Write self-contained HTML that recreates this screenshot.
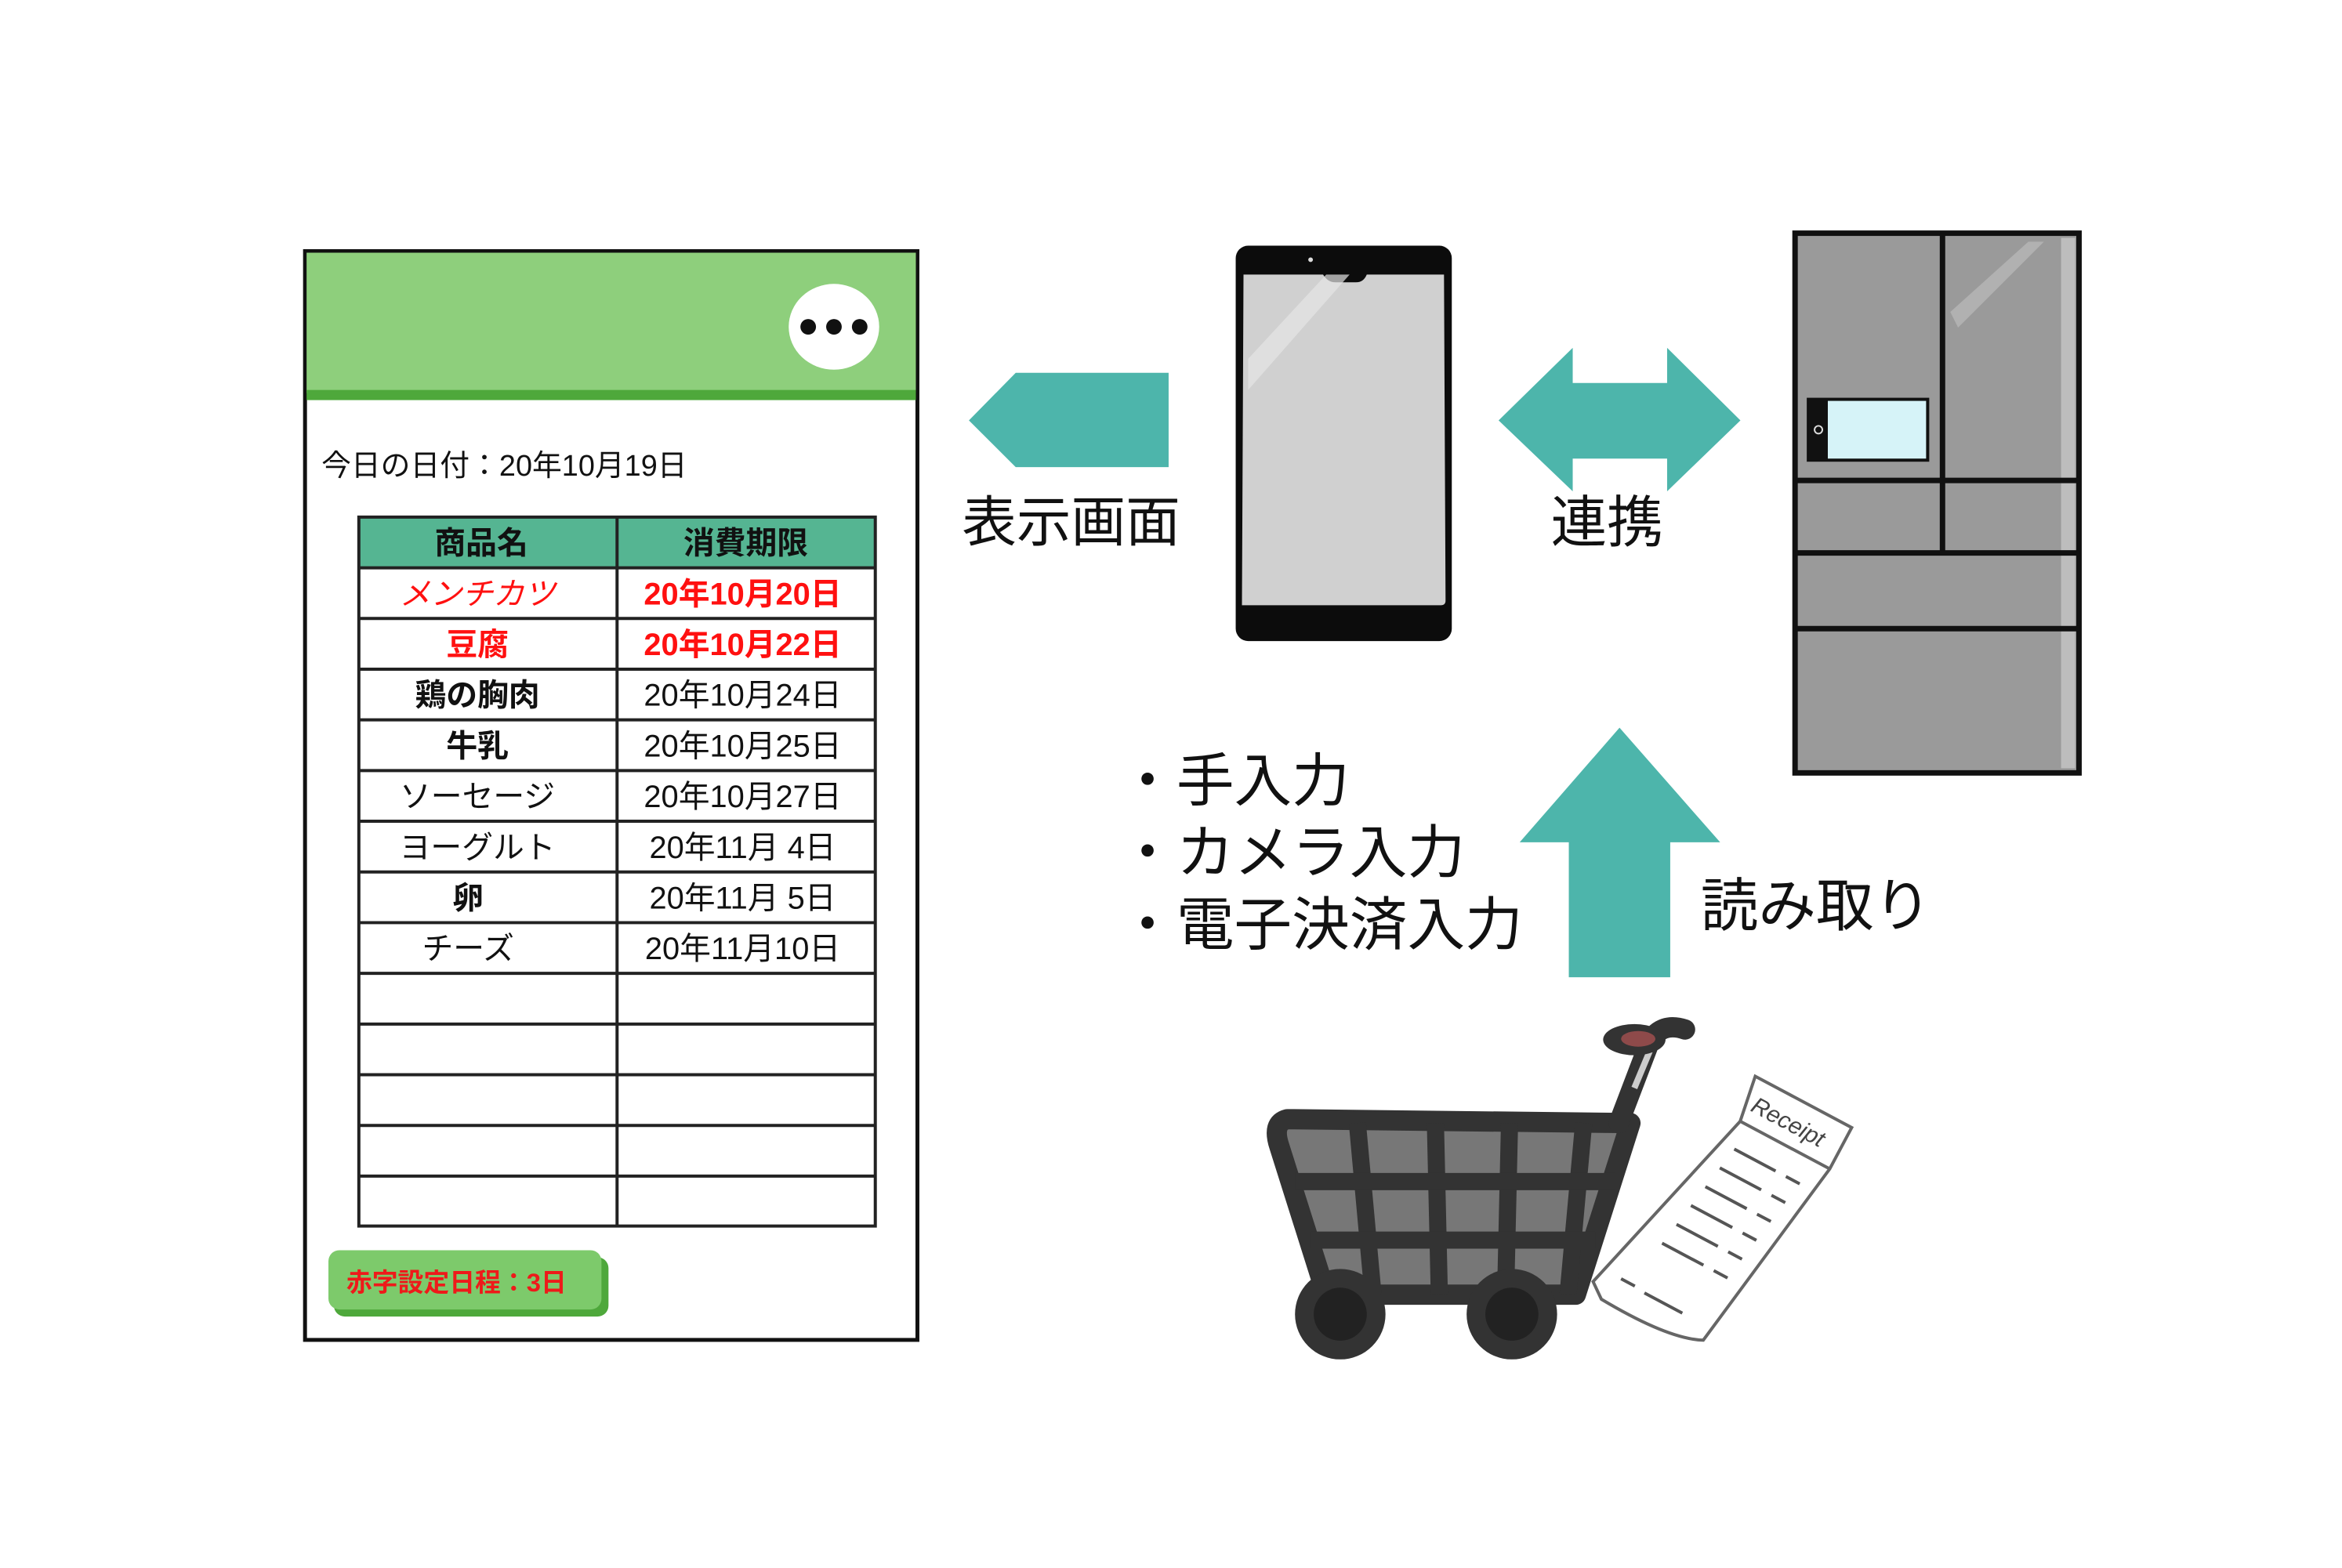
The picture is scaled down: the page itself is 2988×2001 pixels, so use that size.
<!DOCTYPE html>
<html><head><meta charset="utf-8"><style>
html,body{margin:0;padding:0;background:#fff}
svg{display:block}
text{font-family:"Liberation Sans","Noto Sans CJK JP",sans-serif}
</style></head><body>
<svg width="2988" height="2001" viewBox="0 0 2988 2001" xmlns="http://www.w3.org/2000/svg">
<rect width="2988" height="2001" fill="#fff"/>
<g transform="scale(0.9953)">
<!-- left panel -->
<rect x="391" y="322" width="785" height="1396" fill="#fff" stroke="#111" stroke-width="5"/>
<rect x="393" y="324" width="781" height="180" fill="#8ecf7c"/>
<rect x="393" y="500" width="781" height="13" fill="#4ea83b"/>
<ellipse cx="1069" cy="419" rx="58" ry="55" fill="#fff"/>
<circle cx="1036" cy="419" r="10" fill="#111"/><circle cx="1069" cy="419" r="10" fill="#111"/><circle cx="1102" cy="419" r="10" fill="#111"/>
<text x="412" y="610" font-size="38" fill="#111">今日の日付：20年10月19日</text>
<rect x="460" y="663" width="662" height="65" fill="#55b592"/>
<g stroke="#222" stroke-width="4" fill="none">
<rect x="460" y="663" width="662" height="909"/>
<line x1="791" y1="663" x2="791" y2="1572"/>
<line x1="460" y1="728" x2="1122" y2="728"/>
<line x1="460" y1="793" x2="1122" y2="793"/><line x1="460" y1="858" x2="1122" y2="858"/>
<line x1="460" y1="923" x2="1122" y2="923"/><line x1="460" y1="988" x2="1122" y2="988"/>
<line x1="460" y1="1053" x2="1122" y2="1053"/><line x1="460" y1="1118" x2="1122" y2="1118"/>
<line x1="460" y1="1183" x2="1122" y2="1183"/><line x1="460" y1="1248" x2="1122" y2="1248"/>
<line x1="460" y1="1313" x2="1122" y2="1313"/><line x1="460" y1="1378" x2="1122" y2="1378"/>
<line x1="460" y1="1443" x2="1122" y2="1443"/><line x1="460" y1="1508" x2="1122" y2="1508"/>
</g>
<g font-size="40" text-anchor="middle" fill="#111">
<text x="617" y="710" font-weight="bold">商品名</text>
<text x="956" y="710" font-weight="bold">消費期限</text>
<text x="612" y="775" fill="#ff1010" font-style="italic">メンチカツ</text>
<text x="952" y="775" fill="#ff1010" font-weight="bold">20年10月20日</text>
<text x="612" y="840" fill="#ff1010" font-weight="bold">豆腐</text>
<text x="952" y="840" fill="#ff1010" font-weight="bold">20年10月22日</text>
<text x="612" y="905" font-weight="bold">鶏の胸肉</text>
<text x="952" y="905">20年10月24日</text>
<text x="612" y="970" font-weight="bold">牛乳</text>
<text x="952" y="970">20年10月25日</text>
<text x="612" y="1035">ソーセージ</text>
<text x="952" y="1035">20年10月27日</text>
<text x="612" y="1100">ヨーグルト</text>
<text x="952" y="1100">20年11月 4日</text>
<text x="600" y="1165" font-weight="bold">卵</text>
<text x="952" y="1165">20年11月 5日</text>
<text x="600" y="1230">チーズ</text>
<text x="952" y="1230">20年11月10日</text>
</g>
<rect x="428" y="1612" width="352" height="76" rx="14" fill="#4ea83b"/>
<rect x="421" y="1603" width="350" height="76" rx="14" fill="#7dca6b"/>
<text x="444" y="1656" font-size="33" font-weight="bold" fill="#ee1a1a">赤字設定日程：3日</text>
<!-- left arrow -->
<polygon points="1242,539 1302,478 1498,478 1498,599 1302,599" fill="#4db5ab"/>
<text x="1233" y="694" font-size="70" fill="#111">表示画面</text>
<!-- phone -->
<rect x="1584" y="315" width="277" height="507" rx="16" fill="#0c0c0c"/>
<path d="M1594 352 L1696 352 Q1702 362 1712 362 L1738 362 Q1748 362 1752 352 L1851 352 L1853 770 Q1853 776 1847 776 L1592 776 Z" fill="#d0d0d0"/>
<path d="M1600 460 L1700 352 L1730 352 L1600 500 Z" fill="#e6e6e6" opacity="0.7"/>
<circle cx="1680" cy="333" r="3" fill="#ddd"/>
<!-- double arrow -->
<polygon points="1921,539 2016,446 2016,491 2137,491 2137,446 2231,539 2137,630 2137,588 2016,588 2016,630" fill="#4db5ab"/>
<text x="1988" y="695" font-size="72" fill="#111">連携</text>
<!-- fridge -->
<rect x="2301" y="299" width="364" height="692" fill="#9a9a9a" stroke="#111" stroke-width="7"/>
<rect x="2642" y="305" width="18" height="680" fill="#bdbdbd"/>
<path d="M2500 400 L2600 310 L2620 310 L2510 420 Z" fill="#bbb" opacity="0.7"/>
<g stroke="#111" stroke-width="7">
<line x1="2490" y1="299" x2="2490" y2="706"/>
<line x1="2301" y1="616" x2="2665" y2="616"/>
<line x1="2301" y1="709" x2="2665" y2="709"/>
<line x1="2301" y1="806" x2="2665" y2="806"/>
</g>
<rect x="2318" y="512" width="153" height="78" fill="#d6f3f8" stroke="#111" stroke-width="4"/>
<rect x="2318" y="512" width="25" height="78" fill="#111"/>
<circle cx="2331" cy="551" r="5" fill="none" stroke="#ddd" stroke-width="2"/>
<!-- up arrow -->
<polygon points="2076,933 2205,1080 2141,1080 2141,1253 2011,1253 2011,1080 1948,1080" fill="#4db5ab"/>
<g font-size="74" fill="#111">
<text x="1434" y="1027">・手入力</text>
<text x="1434" y="1119">・カメラ入力</text>
<text x="1434" y="1211">・電子決済入力</text>
<text x="2180" y="1187">読み取り</text>
</g>
<!-- cart -->
<g>
<path d="M1650 1435 Q1630 1440 1640 1470 L1700 1660 L2020 1660 L2090 1440 Z" fill="#777" stroke="#333" stroke-width="26" stroke-linejoin="round"/>
<g stroke="#333" stroke-width="22">
<line x1="1740" y1="1440" x2="1760" y2="1660"/><line x1="1840" y1="1440" x2="1845" y2="1660"/><line x1="1935" y1="1440" x2="1930" y2="1660"/><line x1="2030" y1="1440" x2="2010" y2="1660"/>
<line x1="1660" y1="1515" x2="2070" y2="1515"/><line x1="1680" y1="1590" x2="2045" y2="1590"/>
</g>
<path d="M2075 1440 L2115 1335 Q2130 1310 2160 1320" fill="none" stroke="#333" stroke-width="26" stroke-linecap="round"/>
<path d="M2095 1395 L2120 1335" stroke="#ccc" stroke-width="8"/>
<ellipse cx="2095" cy="1333" rx="40" ry="20" fill="#333"/>
<ellipse cx="2100" cy="1332" rx="22" ry="10" fill="#8e4a4a"/>
<circle cx="1718" cy="1685" r="58" fill="#333"/><circle cx="1718" cy="1685" r="34" fill="#222"/>
<circle cx="1938" cy="1685" r="58" fill="#333"/><circle cx="1938" cy="1685" r="34" fill="#222"/>
</g>
<!-- receipt -->
<g transform="translate(2250,1380) rotate(28)">
<path d="M0 0 L140 0 L140 60 L100 330 Q60 350 -40 345 L-60 330 L10 60 Z" fill="#fff" stroke="#666" stroke-width="4"/>
<line x1="10" y1="60" x2="140" y2="60" stroke="#666" stroke-width="4"/>
<text x="14" y="42" font-size="30" fill="#444" font-style="italic">Receipt</text>
<g stroke="#555" stroke-width="4">
<line x1="20" y1="95" x2="80" y2="95"/><line x1="95" y1="95" x2="115" y2="95"/>
<line x1="15" y1="125" x2="75" y2="125"/><line x1="90" y1="125" x2="110" y2="125"/>
<line x1="10" y1="155" x2="70" y2="155"/><line x1="85" y1="155" x2="105" y2="155"/>
<line x1="5" y1="185" x2="65" y2="185"/><line x1="80" y1="185" x2="100" y2="185"/>
<line x1="0" y1="215" x2="60" y2="215"/><line x1="75" y1="215" x2="95" y2="215"/>
<line x1="-5" y1="245" x2="55" y2="245"/><line x1="70" y1="245" x2="90" y2="245"/>
<line x1="-30" y1="310" x2="-10" y2="310"/><line x1="5" y1="312" x2="60" y2="312"/>
</g>
</g>
</g>
</svg>
</body></html>
